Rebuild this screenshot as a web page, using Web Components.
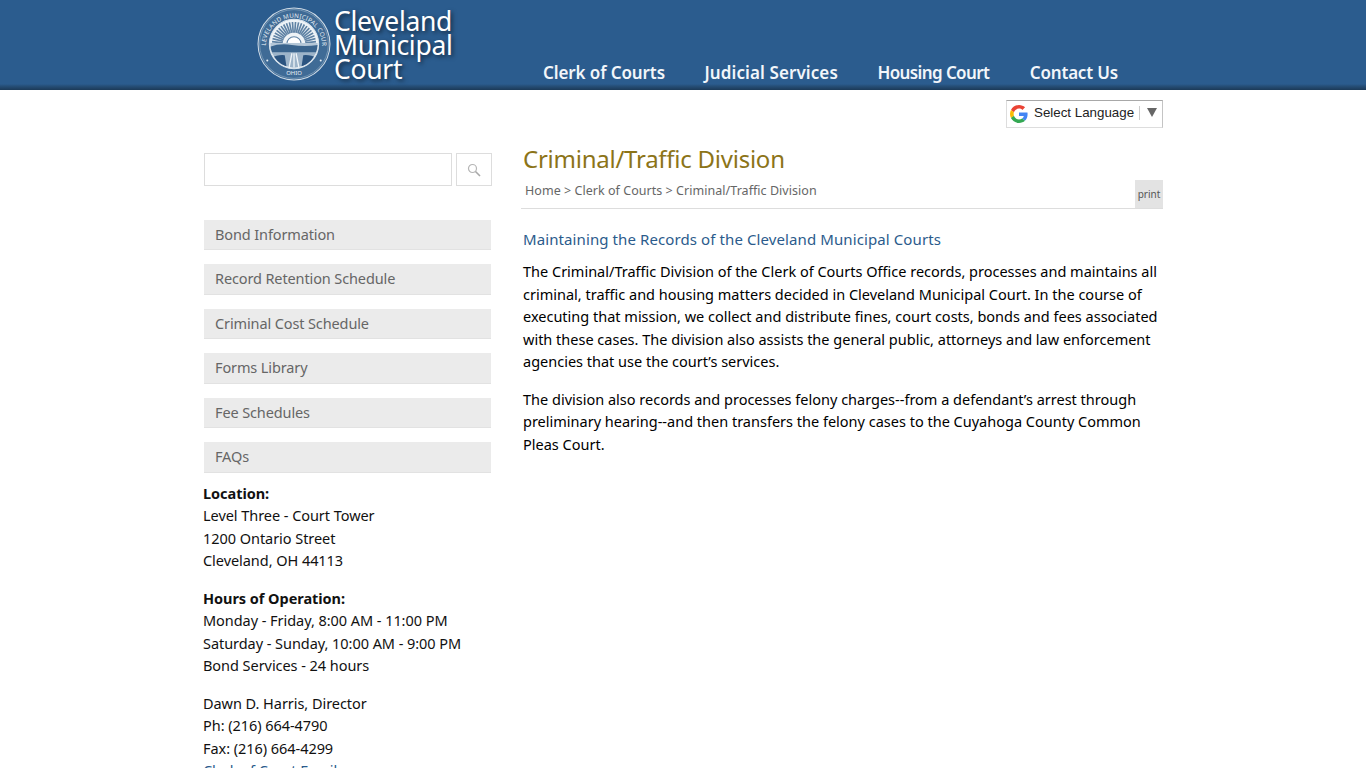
<!DOCTYPE html>
<html lang="en">
<head>
<meta charset="utf-8">
<title>Criminal/Traffic Division</title>
<style>
  html, body { margin: 0; padding: 0; background: #fff; height: 768px; overflow: hidden; }
  body { font-family: "Noto Sans", "Open Sans", sans-serif; color: #000; }
  .wrap { display: grid; grid-template-columns: 288px 640px; column-gap: 32px; width: 960px; margin: 10px 0 0 203px; }
</style>
</head>
<body>
<site-header></site-header>
<lang-bar></lang-bar>
<div class="wrap">
  <side-col>
    <search-box></search-box>
    <side-nav>
      <side-link>Bond Information</side-link>
      <side-link>Record Retention Schedule</side-link>
      <side-link>Criminal Cost Schedule</side-link>
      <side-link>Forms Library</side-link>
      <side-link>Fee Schedules</side-link>
      <side-link>FAQs</side-link>
    </side-nav>
    <contact-block>
      <b>Location:</b><br>Level Three - Court Tower<br>1200 Ontario Street<br>Cleveland, OH 44113
    </contact-block>
    <contact-block>
      <b>Hours of Operation:</b><br>Monday - Friday, 8:00 AM - 11:00 PM<br>Saturday - Sunday, 10:00 AM - 9:00 PM<br>Bond Services - 24 hours
    </contact-block>
    <contact-block>
      Dawn D. Harris, Director<br>Ph: (216) 664-4790<br>Fax: (216) 664-4299<br><a href="#" style="color:#2b5b8c;text-decoration:none">Clerk of Court Email</a>
    </contact-block>
  </side-col>
  <page-content heading="Criminal/Traffic Division">
    <h2 slot="sub">Maintaining the Records of the Cleveland Municipal Courts</h2>
    <p>The Criminal/Traffic Division of the Clerk of Courts Office records, processes and maintains all criminal, traffic and housing matters decided in Cleveland Municipal Court. In the course of executing that mission, we collect and distribute fines, court costs, bonds and fees associated with these cases. The division also assists the general public, attorneys and law enforcement agencies that use the court’s services.</p>
    <p>The division also records and processes felony charges--from a defendant’s arrest through preliminary hearing--and then transfers the felony cases to the Cuyahoga County Common Pleas Court.</p>
  </page-content>
</div>

<script>
class SiteHeader extends HTMLElement {
  constructor() {
    super();
    this.attachShadow({ mode: 'open' });
    // sun rays of the seal
    const rays = [];
    for (let a = -84; a <= 84; a += 8) {
      rays.push(`<line x1="36" y1="14.500" x2="36" y2="25" transform="rotate(${a} 36 36)"/>`);
    }
    this.shadowRoot.innerHTML = `
      <style>
        :host { display: block; height: 90px; background: linear-gradient(#2b5c8e 0, #2b5c8e 84px, #264f78 86px, #1c3a58 90px); font-family: "Noto Sans", sans-serif; }
        .in { display: flex; height: 90px; padding-left: 257px; box-sizing: border-box; }
        svg { width: 74px; height: 74px; margin-top: 7px; flex: none; overflow: visible; }
        .name { margin: 9px 0 0 3px; width: 207px; color: #fff; font-size: 26.5px; line-height: 24px; letter-spacing: -.3px; text-shadow: 2px 2px 4px rgba(0,0,0,.55); }
        nav { display: flex; gap: 39.500px; padding: 62px 0 0 2px; font-size: 17px; line-height: 22px; font-weight: 600; color: #f2f6fa; }
      </style>
      <div class="in">
        <svg viewBox="0 0 72 72">
          <defs>
            <path id="top" d="M8.500 38a27.500 27.500 0 0 1 55 0"/>
            <clipPath id="inner"><circle cx="36" cy="36" r="23"/></clipPath>
          </defs>
          <circle cx="36" cy="36" r="35" fill="#3f6b96" stroke="#cfdbe6" stroke-width="1"/>
          <circle cx="36" cy="36" r="33.500" fill="none" stroke="#8fabc4" stroke-width=".6"/>
          <text font-size="6" fill="#e8eff5" font-family="Noto Sans" letter-spacing=".2"><textPath href="#top" startOffset="50%" text-anchor="middle">CLEVELAND MUNICIPAL COURT</textPath></text>
          <text x="36" y="66" font-size="5.800" fill="#e8eff5" font-family="Noto Sans" text-anchor="middle">OHIO</text>
          <circle cx="10" cy="52" r="1" fill="#e8eff5"/><circle cx="62" cy="52" r="1" fill="#e8eff5"/>
          <circle cx="36" cy="36" r="24" fill="#eef3f7" stroke="#dbe5ed" stroke-width="1"/>
          <g clip-path="url(#inner)">
            <g stroke="#5f82a4" stroke-width="1.600">${rays.join('')}</g>
            <path d="M29 36a7 7 0 0 1 14 0z" fill="#fff" stroke="#5f82a4" stroke-width="1"/>
            <rect x="12" y="35" width="48" height="4" fill="#b5c7d7"/>
            <path d="M12 39q10-4 22-2t26 0v8H12z" fill="#3a648d"/>
            <rect x="12" y="44" width="48" height="16" fill="#9db4c9"/>
            <path d="M13 50q8-4 14-3l2 13H13zM59 50q-8-4-14-3l-2 13h16z" fill="#2b5480"/>
            <path d="M31 60l3-15M36 60V45M41 60l-3-15" stroke="#eef3f7" stroke-width="1.300"/>
          </g>
        </svg>
        <div class="name">Cleveland<br>Municipal<br>Court</div>
        <nav>
          <span style="letter-spacing:-.1px">Clerk of Courts</span>
          <span style="letter-spacing:.1px">Judicial Services</span>
          <span style="letter-spacing:-.6px">Housing Court</span>
          <span style="letter-spacing:-.2px;margin-left:1px">Contact Us</span>
        </nav>
      </div>`;
  }
}

class LangBar extends HTMLElement {
  constructor() {
    super();
    this.attachShadow({ mode: 'open' });
    this.shadowRoot.innerHTML = `
      <style>
        :host { display: flex; justify-content: flex-end; width: 1163px; height: 28px; padding-top: 10px; font-family: "Liberation Sans", sans-serif; }
        .box { display: flex; align-items: center; box-sizing: border-box; width: 157px; height: 28px; border: 1px solid #ddd; border-top-color: #a8a8a8; border-right-color: #c4c4c4; padding: 0 0 3px 3px; font-size: 13.330px; color: #222; background: #fff; }
        svg { width: 18px; height: 18px; margin: 3px 6px 0 0; }
        .sep { width: 1px; height: 14px; background: #ccc; margin: 0 7px 0 5px; }
        .arrow { width: 0; height: 0; border: 5px solid transparent; border-top: 9px solid #666; border-bottom: 0; }
      </style>
      <div class="box">
        <svg viewBox="0 0 48 48">
          <path fill="#EA4335" d="M24 9.500c3.500 0 6.700 1.200 9.200 3.600l6.900-6.900C35.900 2.400 30.500 0 24 0 14.600 0 6.500 5.400 2.600 13.200l8 6.200C12.400 13.700 17.700 9.500 24 9.500z"/>
          <path fill="#4285F4" d="M46.900 24.500c0-1.600-.1-3.100-.4-4.500H24v9h12.900c-.6 3-2.200 5.500-4.800 7.200l7.700 6c4.500-4.200 7.100-10.300 7.100-17.700z"/>
          <path fill="#FBBC05" d="M10.500 28.600c-.5-1.400-.8-3-.8-4.600s.3-3.200.8-4.600l-8-6.200C.9 16.500 0 20.100 0 24s.9 7.500 2.600 10.800l7.900-6.200z"/>
          <path fill="#34A853" d="M24 48c6.500 0 11.900-2.100 15.900-5.800l-7.700-6c-2.200 1.500-4.900 2.300-8.200 2.300-6.300 0-11.600-4.200-13.500-9.900l-8 6.200C6.500 42.600 14.600 48 24 48z"/>
        </svg>
        <span>Select Language</span><span class="sep"></span><span class="arrow"></span>
      </div>`;
  }
}

class SideCol extends HTMLElement {
  constructor() {
    super();
    this.attachShadow({ mode: 'open' });
    this.shadowRoot.innerHTML = `
      <style>:host { display: block; padding-top: 15px; }</style>
      <slot></slot>`;
  }
}

class SearchBox extends HTMLElement {
  constructor() {
    super();
    this.attachShadow({ mode: 'open' });
    this.shadowRoot.innerHTML = `
      <style>
        :host { display: flex; gap: 4px; margin-left: 1px; }
        .field { flex: none; box-sizing: border-box; width: 248px; height: 33px; border: 1px solid #ddd; background: #fff; }
        .btn { flex: none; box-sizing: border-box; display: flex; align-items: center; justify-content: center; width: 36px; height: 33px; border: 1px solid #ddd; }
        svg { width: 14px; height: 14px; }
      </style>
      <div class="field"></div>
      <div class="btn">
        <svg viewBox="0 0 14 14" fill="none"><circle cx="5.500" cy="5.500" r="4" stroke="#b5b5b5" stroke-width="1.200"/><path d="M8.500 8.500l4.500 4.500" stroke="#a8a8a8" stroke-width="1.600"/></svg>
      </div>`;
  }
}

class SideNav extends HTMLElement {
  constructor() {
    super();
    this.attachShadow({ mode: 'open' });
    this.shadowRoot.innerHTML = `
      <style>:host { display: flex; flex-direction: column; gap: 14px; margin: 33.700px 0 9px 1px; width: 287px; }</style>
      <slot></slot>`;
  }
}

class SideLink extends HTMLElement {
  constructor() {
    super();
    this.attachShadow({ mode: 'open' });
    this.shadowRoot.innerHTML = `
      <style>
        :host { display: block; box-sizing: border-box; height: 30.500px; padding-left: 11px; background: #ebebeb; border-bottom: 1px solid #e2e2e2; color: #666; font-size: 14.500px; line-height: 29px; letter-spacing: -.12px; }
      </style>
      <slot></slot>`;
  }
}

class ContactBlock extends HTMLElement {
  constructor() {
    super();
    this.attachShadow({ mode: 'open' });
    this.shadowRoot.innerHTML = `
      <style>
        :host { display: block; margin-bottom: 15px; font-size: 14.500px; line-height: 22.500px; color: #111; letter-spacing: -.05px; }
      </style>
      <slot></slot>`;
  }
}

class PageContent extends HTMLElement {
  constructor() {
    super();
    this.attachShadow({ mode: 'open' });
    this.shadowRoot.innerHTML = `
      <style>
        :host { display: block; margin-top: 3px; font-size: 14.500px; line-height: 22.500px; }
        h1 { margin: 0; font-size: 24px; line-height: 36px; font-weight: 400; color: #8c7418; letter-spacing: -.25px; }
        .crumbs { display: flex; justify-content: space-between; align-items: flex-end; box-sizing: border-box; height: 29px; margin: 3px 0 19px -2px; width: 642px; border-bottom: 1px solid #ddd; font-size: 12.500px; color: #666; letter-spacing: .04px; }
        .crumbs span:first-child { padding: 1px 0 0 4px; align-self: flex-start; line-height: 20px; }
        .print { width: 28px; height: 28px; background: #e3e3e3; font-size: 10px; line-height: 28px; text-align: center; color: #555; letter-spacing: 0; }
        ::slotted(h2) { margin: 0 0 10px; font-size: 15px; line-height: 22px; font-weight: 400; color: #2b5b8c; letter-spacing: .1px; }
        ::slotted(p) { margin: 0 0 15px; }
      </style>
      <h1>${this.getAttribute('heading')}</h1>
      <div class="crumbs"><span>Home &gt; Clerk of Courts &gt; Criminal/Traffic Division</span><span class="print">print</span></div>
      <slot name="sub"></slot>
      <slot></slot>`;
  }
}

customElements.define('site-header', SiteHeader);
customElements.define('lang-bar', LangBar);
customElements.define('side-col', SideCol);
customElements.define('search-box', SearchBox);
customElements.define('side-nav', SideNav);
customElements.define('side-link', SideLink);
customElements.define('contact-block', ContactBlock);
customElements.define('page-content', PageContent);
</script>
</body>
</html>
